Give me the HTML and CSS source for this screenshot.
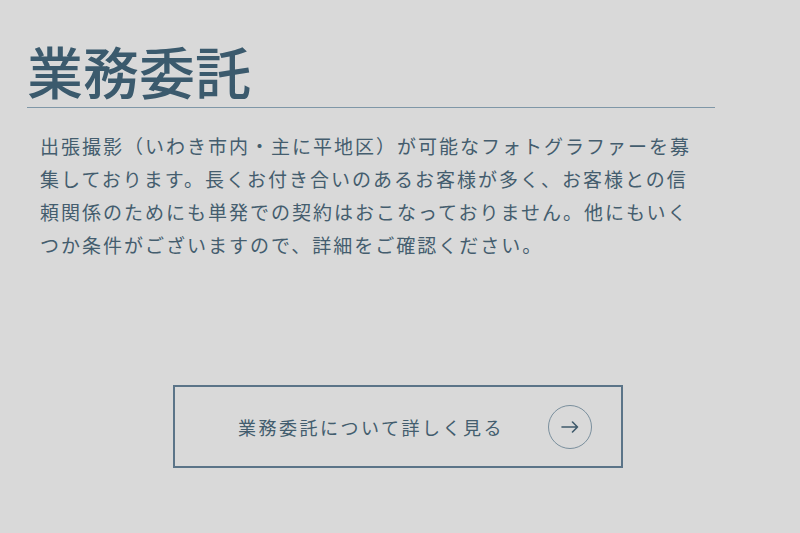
FILE: index.html
```html
<!DOCTYPE html>
<html lang="ja">
<head>
<meta charset="utf-8">
<link rel="stylesheet" href="styles.css">
</head>
<body>
<section class="section">
  <h2 class="title">業務委託</h2>
  <p class="lead">出張撮影（いわき市内・主に平地区）が可能なフォトグラファーを募集しております。長くお付き合いのあるお客様が多く、お客様との信頼関係のためにも単発での契約はおこなっておりません。他にもいくつか条件がございますので、詳細をご確認ください。</p>
  <a class="more" href="#">
    <span class="more-label">業務委託について詳しく見る</span>
    <span class="more-icon">
      <svg width="18" height="12" viewBox="0 0 18 12" fill="none" stroke="currentColor" stroke-width="1.6" stroke-linecap="round" stroke-linejoin="round"><path d="M1 6H16.5M11.5 1L16.5 6L11.5 11"/></svg>
    </span>
  </a>
</section>
</body>
</html>
```
FILE: styles.css
```css
html, body {
  margin: 0;
  padding: 0;
  background: #d9d9d9;
}
body {
  font-family: "Noto Sans CJK JP", "Noto Sans", sans-serif;
  color: #435d6e;
  width: 800px;
  height: 533px;
  overflow: hidden;
}
.section {
  padding: 42px 85px 0 27px;
}
.title {
  margin: 0;
  font-size: 56px;
  line-height: 56px;
  font-weight: 500;
  color: #3b5a6d;
  padding-bottom: 9px;
  border-bottom: 1px solid #7f97a7;
}
.lead {
  margin: 21px 0 0 13px;
  font-size: 19px;
  line-height: 33px;
  letter-spacing: 2px;
  width: 662px;
  color: #445d6e;
}
.more {
  display: flex;
  align-items: center;
  box-sizing: border-box;
  width: 450px;
  height: 83px;
  margin: 124px 0 0 146px;
  padding-left: 63px;
  border: 2px solid #5b7488;
  text-decoration: none;
  color: #435d6e;
}
.more-label {
  font-size: 18px;
  letter-spacing: 2.5px;
  line-height: 1;
}
.more-icon {
  margin-left: 44px;
  width: 44px;
  height: 44px;
  box-sizing: border-box;
  border: 1px solid #7a8f9d;
  border-radius: 50%;
  display: flex;
  align-items: center;
  justify-content: center;
  color: #3f5a6b;
}
```
